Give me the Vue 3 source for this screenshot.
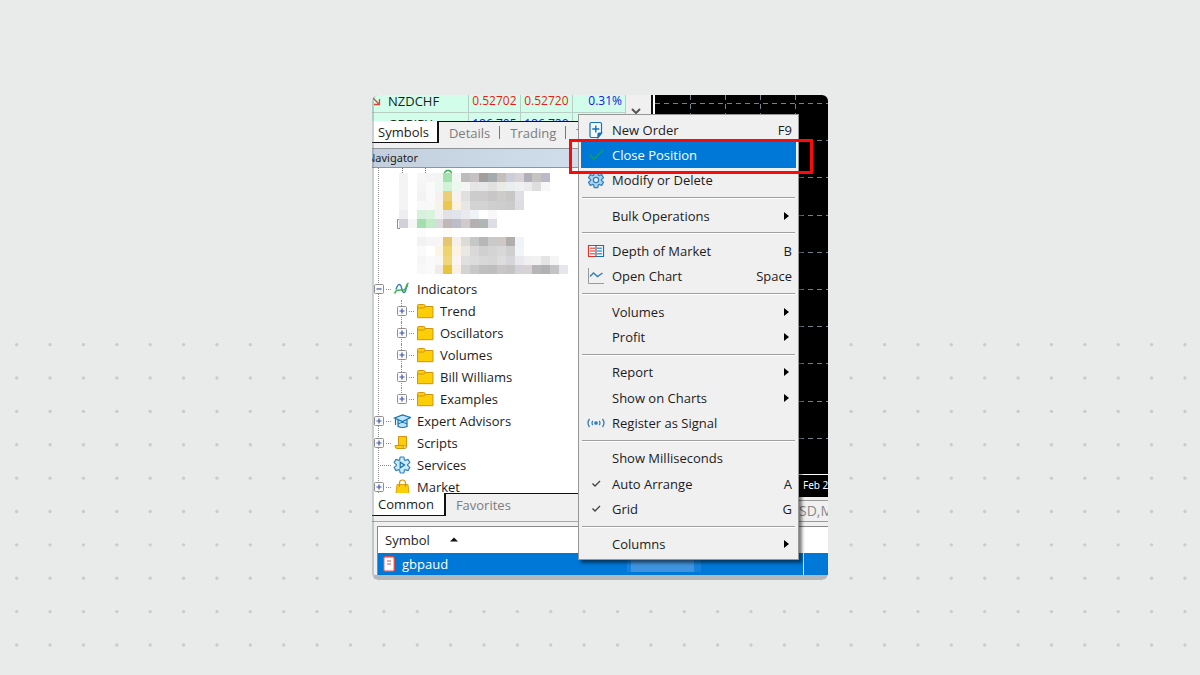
<script setup>
import { ref } from 'vue'

const quotes = [
  { symbol: 'NZDCHF', dir: 'down', bid: '0.52702', ask: '0.52720', change: '0.31%' },
  { symbol: 'GBPJPY', dir: 'flat', bid: '186.705', ask: '186.729', change: '' }
]

const tree = [
  { label: 'Indicators', icon: 'indicators', level: 1, box: 'minus' },
  { label: 'Trend', icon: 'folder', level: 2, box: 'plus' },
  { label: 'Oscillators', icon: 'folder', level: 2, box: 'plus' },
  { label: 'Volumes', icon: 'folder', level: 2, box: 'plus' },
  { label: 'Bill Williams', icon: 'folder', level: 2, box: 'plus' },
  { label: 'Examples', icon: 'folder', level: 2, box: 'plus', last: true },
  { label: 'Expert Advisors', icon: 'expert', level: 1, box: 'plus' },
  { label: 'Scripts', icon: 'script', level: 1, box: 'plus' },
  { label: 'Services', icon: 'service', level: 1, box: '' },
  { label: 'Market', icon: 'market', level: 1, box: 'plus' }
]

const menu = [
  { label: 'New Order', icon: 'new', key: 'F9' },
  { label: 'Close Position', icon: 'close', active: true },
  { label: 'Modify or Delete', icon: 'gear' },
  { sep: true },
  { label: 'Bulk Operations', sub: true },
  { sep: true },
  { label: 'Depth of Market', icon: 'depth', key: 'B' },
  { label: 'Open Chart', icon: 'chart', key: 'Space' },
  { sep: true },
  { label: 'Volumes', sub: true },
  { label: 'Profit', sub: true },
  { sep: true },
  { label: 'Report', sub: true },
  { label: 'Show on Charts', sub: true },
  { label: 'Register as Signal', icon: 'signal' },
  { sep: true },
  { label: 'Show Milliseconds' },
  { label: 'Auto Arrange', icon: 'check', key: 'A' },
  { label: 'Grid', icon: 'check', key: 'G' },
  { sep: true },
  { label: 'Columns', sub: true }
]

// Censored account rows: one colour per block, "-" leaves the block empty.
const mosaic = [
  'f3f3f3 - f7f7f7 f5f5f5 f3f5f3 a3e2af f3f6f3 bdbbbb c8c1c4 a19f9d a4aaae c5bebb cbced6 d8d2d8 b3aeb8 c4c4c0 bdb9cb',
  'f4f4f4 - f5f5f5 fafafa edf8f0 d0f3d7 eaf8ed f5f6f4 e5e5e5 e7e7e7 e1e2e0 eaeae7 ebeeee f0f0f0 ececee dedede f7f7f8',
  'f4f4f4 - f3f3f3 fafafa f7f2ef ebcf75 f6f2f0 e0dfe1 cdcccd cdcbcb c8c7c7 cdccca c8c7c6 e0dfe4',
  'f4f4f4 - f8f8f8 f8f8f8 f8f3e8 ebc74e faf3e0 e9e7e6 d3d3d3 d3d3d3 cfcfcf cdcdcd cbcbcb dedee2',
  'eeeef0 - d6f1dc daf3df f2f2f2 e2e2e6 e2e4eb eaeaee f0f3f6 - f8f8fa',
  'd0d0d8 f6f6f6 a2dfae c2ebc8 dcd9da c0b7b8 bcbdc6 d0cacb b4b0b3 b0b6b6 dedce5',
  '- - fbfbfb - - fdfbf8',
  '- - f2f2f2 f5f5f5 f8f6f4 e6c66c f6f0ea dedad8 c4c8c8 b6b8b8 cacaca cfc8c5 b0afae eef4f9',
  '- - fafafa - fbf5e8 efd36c fbf4e4 ebe8e4 dad8d8 d0d0d0 d4d4d4 d8d8d8 cfcfcf f2f5f7',
  '- - f6f6f6 fafafa faf8f5 f1d67a faf5f0 e0dede dcdcdc d8d8d8 d6d6d6 dddddf d6d6da e9e9ed f0f0f2 f2f2f2 e4e4e6 f5f5f5 -',
  '- - f8f8f8 fafafa f2ece9 e8c33c f8f2e6 d3d2d4 c8c8c8 c0bfc0 bebebe c8c6c6 c4c4c4 d2d2d8 d6d2d6 b6b6b8 b2b2b4 c4c4c6 e6e6ee'
].flatMap((row, y) =>
  row.split(' ').map((c, x) => ({ x, y, c })).filter(b => b.c !== '-')
)

const dots = []
for (let r = 0; r < 10; r++)
  for (let c = 0; c < 36; c++) dots.push({ x: 50 + c * 100.14, y: 1034 + r * 100.1 })

// Six-toothed cog centred in an 18-unit box.
function cog(outer, inner) {
  const pts = []
  for (let k = 0; k < 6; k++)
    for (const [a, r] of [[-26, inner], [-13, outer], [13, outer], [26, inner]]) {
      const t = ((k * 60 + a - 90) * Math.PI) / 180
      pts.push((9 + r * Math.cos(t)).toFixed(2) + ' ' + (9 + r * Math.sin(t)).toFixed(2))
    }
  return 'M' + pts.join('L') + 'Z'
}
const cogPath = cog(7.8, 5.4)
const servicePath = cog(8.2, 5.6)

const gridRows = Array.from({ length: 10 }, (_, i) => Math.round(8 + i * 37.2))
const gridCols = [35, 70, 105, 140]
const marketTab = ref('Symbols')
const navTab = ref('Common')
</script>

<template>
  <main class="page">
    <svg class="dots" viewBox="0 0 3600 2025" preserveAspectRatio="none" aria-hidden="true">
      <circle v-for="(d, i) in dots" :key="i" :cx="d.x" :cy="d.y" r="5" fill="#c9cccb" />
    </svg>

    <section class="window">
      <div class="upper">
        <div class="left">
          <div class="market">
            <table class="quotes">
              <colgroup><col class="c-sym"><col class="c-num"><col class="c-num"><col></colgroup>
              <tbody>
                <tr v-for="q in quotes" :key="q.symbol">
                  <td class="sym">
                    <div>
                      <svg width="10" height="10" viewBox="0 0 10 10" fill="none">
                        <path v-if="q.dir === 'down'" d="M1 2l6 6M7.500 3v5.500H2" stroke="#e0443c" stroke-width="1.300" />
                        <path v-else d="M0 3h8" stroke="#2fae4a" stroke-width="2" />
                      </svg>{{ q.symbol }}
                    </div>
                  </td>
                  <td :class="q.dir">{{ q.bid }}</td>
                  <td :class="q.dir">{{ q.ask }}</td>
                  <td class="flat">{{ q.change }}</td>
                </tr>
              </tbody>
            </table>
            <div class="scroll">
              <svg width="10" height="6" viewBox="0 0 10 6" fill="none"><path d="M1 1l4 4 4-4" stroke="#555" stroke-width="2" /></svg>
            </div>
          </div>

          <nav class="tabs">
            <button v-for="t in ['Symbols', 'Details', 'Trading', 'Ticks']" :key="t" :class="{ on: marketTab === t }" @click="marketTab = t">{{ t }}</button>
          </nav>

          <h2 class="nav-title">Navigator</h2>

          <div class="tree">
            <div class="censored">
              <svg class="blocks" viewBox="0 0 169 106" aria-hidden="true">
                <path d="M3.500 0v5M26.500 0v5" stroke="#777" stroke-dasharray="1 1" />
                <path d="M45.500 6q0-3.500 3.500-3.500t3.500 3.500" stroke="#2fae4a" stroke-width="1.300" fill="none" />
                <path d="M1 51.500h-2.500v9h2.500" stroke="#8f8f8f" fill="none" />
                <g transform="translate(0 5) scale(8.895 9.18)" shape-rendering="crispEdges">
                  <rect v-for="(b, i) in mosaic" :key="i" :x="b.x" :y="b.y" width="1" height="1" :fill="'#' + b.c" />
                </g>
              </svg>
            </div>
            <div v-for="n in tree" :key="n.label" class="node" :class="['l' + n.level, { last: n.last }]">
              <button v-if="n.box" class="box" :aria-label="'Toggle ' + n.label">
                <svg width="10" height="10" viewBox="0 0 10 10">
                  <rect x="0.500" y="0.500" width="9" height="9" rx="1" fill="#fafafa" stroke="#8f8f8f" />
                  <path :d="n.box === 'plus' ? 'M2.500 5h5M5 2.500v5' : 'M2.500 5h5'" stroke="#3c55a8" stroke-width="1.200" />
                </svg>
              </button>
              <span v-else class="box"></span>
              <span class="link" :class="{ long: !n.box }"></span>
              <svg class="icon" width="18" height="18" viewBox="0 0 18 18" fill="none">
                <g v-if="n.icon === 'folder'">
                  <path d="M1.500 3.500q0-1 1-1h5.200q1.300 0 1.300 1.200v.8h8v11.200H1.500z" fill="#fbce07" stroke="#cf9412" />
                  <path d="M2 6h5.500q1.500 0 1.500-1.500" stroke="#cf9412" />
                </g>
                <g v-else-if="n.icon === 'indicators'" stroke-width="1.400">
                  <path d="M3 9.500C4 6 4.500 4.500 6.500 4.500c2.500 0 2 8 4.500 8s1.500-6.500 4-7" stroke="#3585bd" />
                  <path d="M1.500 13.500l2-3 3.500-.5h4l1.500-1.500 1.500-4 1.500-1.500" stroke="#3db54a" />
                </g>
                <g v-else-if="n.icon === 'expert'" stroke="#1671ad" stroke-width="1.200">
                  <path d="M5 8v6.500q4.500 2 9 0V8" fill="#bfe4fa" />
                  <path d="M1.500 6l8-3 8 2.500-8 4z" fill="#bfe4fa" />
                  <path d="M2.500 6.500v6.500M5 12q4.500-3 9 0" />
                </g>
                <g v-else-if="n.icon === 'script'">
                  <path d="M5.500 2.500h8v9.500h-8z" fill="#fbce07" stroke="#cf9412" />
                  <path d="M2 11.500h8q0 3 2 3H4q-2 0-2-3zM13.500 12q0 2.500-1.500 2.500" fill="#fbce07" stroke="#cf9412" />
                </g>
                <g v-else-if="n.icon === 'service'">
                  <path :d="servicePath" fill="#cbeafd" stroke="#3585bd" stroke-width="1.200" stroke-linejoin="round" />
                  <path d="M7.200 6.200v5.600l4.300-2.800z" stroke="#1671ad" stroke-width="1.200" />
                </g>
                <g v-else>
                  <path d="M4 6.500h11l1 9.500H3z" fill="#fbce07" stroke="#d9a20f" />
                  <path d="M6.500 9V5q0-3 3-3t3 3v4" stroke="#cf9412" stroke-width="1.200" />
                </g>
              </svg>
              <span>{{ n.label }}</span>
            </div>
          </div>

          <nav class="tabs lower">
            <button v-for="t in ['Common', 'Favorites']" :key="t" :class="{ on: navTab === t }" @click="navTab = t">{{ t }}</button>
          </nav>
        </div>

        <div class="right">
          <div class="plot">
            <svg width="100%" height="100%" stroke="#73818f" stroke-dasharray="5 4" shape-rendering="crispEdges" aria-hidden="true">
              <line v-for="y in gridRows" :key="'r' + y" x1="0" x2="100%" :y1="y" :y2="y" />
              <line v-for="x in gridCols" :key="'c' + x" :x1="x" :x2="x" y1="0" y2="100%" />
            </svg>
          </div>
          <div class="axis">Feb 2</div>
          <div class="chart-tab">SD,M</div>
        </div>
      </div>

      <div class="toolbox">
        <table class="trades">
          <colgroup><col><col class="c-last"></colgroup>
          <thead>
            <tr>
              <th>Symbol<svg width="8" height="5" viewBox="0 0 8 5"><path d="M0 4.500L4 .5l4 4z" fill="#111" /></svg></th>
              <th></th>
            </tr>
          </thead>
          <tbody>
            <tr>
              <td>
                <div class="trade">
                  <svg width="12" height="16" viewBox="0 0 12 16"><rect x="0.700" y="0.700" width="10.600" height="14.600" rx="1.500" fill="#fff" stroke="#d8504c" stroke-width="1.400" /><path d="M4 5h4M4 8h4" stroke="#d8504c" stroke-width="1.200" /></svg>
                  <span>gbpaud</span>
                  <i class="hidden-value"></i>
                </div>
              </td>
              <td></td>
            </tr>
          </tbody>
        </table>
      </div>

      <div class="menu" role="menu">
        <template v-for="(m, i) in menu" :key="i">
          <hr v-if="m.sep">
          <button v-else role="menuitem" :class="{ active: m.active }">
            <svg class="mi" width="18" height="18" viewBox="0 0 18 18" fill="none">
              <g v-if="m.icon === 'new'" stroke="#1671ad" stroke-width="1.200">
                <path d="M4.500 1.500h8.500q1.500 0 1.500 1.500v9l-3.500 4.500H4.500q-1.500 0-1.500-1.500V3q0-1.500 1.500-1.500z" fill="#f3faff" />
                <path d="M14.500 12h-2.500q-1 0-1 1v3.500z" fill="#1671ad" />
                <path d="M5.300 8h7M8.800 4.500v7" stroke-width="1.400" />
              </g>
              <path v-else-if="m.icon === 'close'" d="M2.500 8.500l4.500 4.500 9-9" stroke="#0d9e63" stroke-width="1.600" />
              <g v-else-if="m.icon === 'gear'" stroke="#3480b8" stroke-width="1.300" stroke-linejoin="round">
                <path :d="cogPath" fill="#a9d3ee" />
                <circle cx="9" cy="9" r="2.600" fill="#f0f0f0" />
              </g>
              <g v-else-if="m.icon === 'depth'" stroke-width="1.200">
                <path d="M9 3.500H1.500v11H9" fill="#fff" stroke="#e0322c" /><path d="M9 3.500h7.500v11H9" fill="#fff" stroke="#1671ad" />
                <path d="M3 6.200h5M3 9h5M3 11.800h5" stroke="#ee6a62" stroke-width="1.600" /><path d="M10 6.200h5M10 9h5M10 11.800h5" stroke="#4a9bd0" stroke-width="1.600" />
                <path d="M9 3v12" stroke="#53597c" />
              </g>
              <g v-else-if="m.icon === 'chart'">
                <path d="M1.500 1v15.500H17" stroke="#9b9b9b" /><path d="M3 9.500L6.500 6l4 3.500L15.500 6" stroke="#3480b8" stroke-width="1.400" />
              </g>
              <g v-else-if="m.icon === 'signal'" stroke="#3480b8" stroke-width="1.300">
                <circle cx="9" cy="9" r="1.200" fill="#1671ad" />
                <path d="M5.800 6.800q-1.500 2.200 0 4.400M12.200 6.800q1.500 2.200 0 4.400M2.500 5q-3 4 0 8M15.500 5q3 4 0 8" />
              </g>
              <path v-else-if="m.icon === 'check'" d="M5.500 8.500l2.500 2.500 5-5" stroke="#444" stroke-width="1.400" />
            </svg>
            <span class="label">{{ m.label }}</span>
            <span v-if="m.key">{{ m.key }}</span>
            <svg v-if="m.sub" class="sub" width="5" height="8" viewBox="0 0 5 8"><path d="M0 0l5 4-5 4z" fill="#000" /></svg>
          </button>
        </template>
      </div>
    </section>
  </main>
</template>

<style>
html, body { margin: 0; background: #e8ebea; }
</style>

<style scoped>
.page {
  position: relative;
  min-height: 100vh;
  display: flex;
  align-items: center;
  justify-content: center;
  overflow: hidden;
  font: 13px/22px "Open Sans", "Noto Sans", sans-serif;
  color: #1c1c1c;
}
.dots { position: absolute; inset: 0; width: 100%; height: 100%; }
button { font: inherit; color: inherit; border: 0; padding: 0; background: none; text-align: left; }

.window {
  position: relative;
  width: 38%;
  min-width: 456px;
  overflow: hidden;
  border-radius: 6px;
  background: #f0f0f0;
}
.window::after {
  content: "";
  position: absolute;
  inset: 0;
  border-left: 2px solid rgba(110, 120, 125, .35);
  border-bottom: 5px solid rgba(90, 100, 105, .4);
  border-radius: 6px;
  pointer-events: none;
}
.upper { display: grid; grid-template-columns: 281px 1fr; padding-bottom: 4px; }
.left { min-width: 0; border-bottom: 1px solid #a8a8a8; }

.market { display: flex; height: 26px; overflow: hidden; align-items: flex-start; }
.quotes { width: 254px; table-layout: fixed; border-collapse: collapse; margin-top: -5px; background: #d2fdea; }
.c-sym { width: 96px; }
.c-num { width: 52px; }
.quotes td { height: 21px; padding: 0 3px; text-align: right; border-right: 1px solid #b9cfc5; border-bottom: 1px solid #b9cfc5; white-space: nowrap; font-size: 12px; }
.quotes .sym { text-align: left; padding: 0; font-size: 13px; }
.sym div { display: flex; align-items: center; gap: 6px; }
.quotes .down { color: #f01818; }
.quotes .flat { color: #1414f0; }
.scroll { flex: 1; align-self: stretch; border-right: 2px solid #111; padding: 13px 0 0 5px; line-height: 0; }

.tabs { display: flex; height: 22px; line-height: 20px; color: #7c7c7c; margin-bottom: 5px; }
.tabs button { flex: none; padding: 0 10px; position: relative; border-top: 1px solid #111; }
.tabs button:last-child { flex: 1; }
.tabs .on { background: #fff; color: #1c1c1c; border: solid #111; border-width: 0 2px 1px 0; padding: 0 8px 0 6px; }
.tabs button:not(.on):not(:last-child)::after { content: ""; position: absolute; right: 0; top: 4px; height: 13px; border-right: 1px solid #777; }
.nav-title {
  margin: 0;
  border: solid #8f959a;
  border-width: 1px 0;
  height: 18px;
  font: 11px/18px "Noto Sans", sans-serif;
  text-indent: -5px;
  background: linear-gradient(90deg, #c3cfdd, #d5e3f1);
}

.tree { position: relative; height: 325px; overflow: hidden; background: #fff; }
.tree::before { content: ""; position: absolute; left: 6px; top: 0; bottom: 0; border-left: 1px dotted #8c8c8c; }
.censored { height: 110px; padding-left: 27px; }
.blocks { display: block; width: 169px; height: 106px; overflow: visible; }
.node { position: relative; display: flex; align-items: center; height: 22px; padding-left: 2px; }
.node.l2 { padding-left: 25px; }
.node.l2::before { content: ""; position: absolute; left: 29px; top: 0; bottom: 0; border-left: 1px dotted #8c8c8c; }
.node.last::before { bottom: 11px; }
.box { position: relative; width: 10px; height: 10px; line-height: 0; }
.link { width: 5px; margin: 0 2px; border-top: 1px dotted #8c8c8c; }
.link.long { width: 11px; margin-left: -4px; }
.icon { margin-right: 6px; }

.tabs.lower { height: 23px; line-height: 20px; }
.lower .on { padding-right: 10px; }

.right { display: flex; flex-direction: column; border-left: 2px solid #fff; }
.plot { flex: 1; min-height: 0; background: #000; line-height: 0; }
.axis { height: 22px; background: #000; color: #fff; border-top: 1px solid #fff; font: 10px/20px "Noto Sans", sans-serif; padding-left: 148px; overflow: hidden; white-space: nowrap; }
.chart-tab { height: 20px; margin-top: 3px; border: solid #999; border-width: 1px 0; padding-left: 144px; color: #8a8a8a; font-size: 14px; line-height: 20px; overflow: hidden; white-space: nowrap; }

.toolbox { padding: 0 0 5px 5px; background: #f0f0f0; }
.trades { width: 100%; table-layout: fixed; border-collapse: collapse; background: #fff; border-left: 1px solid #888; border-top: 1px solid #888; }
.c-last { width: 25px; }
.trades th { height: 26px; padding: 0 7px; font-weight: 400; text-align: left; }
.trades th svg { margin-left: 20px; vertical-align: 3px; }
.trades td { height: 21px; padding: 0; background: #0078d7; color: #fff; border-right: 1px solid #d8e9f8; }
.trades td:last-child, .trades th:last-child { border-right: 0; }
.trade { display: flex; align-items: center; gap: 7px; padding-left: 5px; }
.hidden-value { width: 74px; height: 15px; margin-left: 172px; background: linear-gradient(90deg, #1482da 6%, #3f93df 6% 90%, #1482da 90%); }

.menu {
  position: absolute;
  left: 206px;
  top: 19px;
  bottom: 20px;
  width: 221px;
  box-sizing: border-box;
  display: flex;
  flex-direction: column;
  padding: 2px;
  border: 1px solid #979797;
  background: #f0f0f0;
  box-shadow: 3px 3px 3px rgba(0, 0, 0, .5);
}
.menu button { position: relative; flex: 1 1 0; min-height: 0; display: flex; align-items: center; padding: 0 4px 0 6px; }
.menu .label { flex: 1; margin-left: 7px; }
.menu hr { box-sizing: border-box; width: auto; height: 2px; margin: 4px 1px; border: 0; border-top: 1px solid #a0a0a0; border-bottom: 1px solid #fff; }
.menu .active { background: #0078d7; color: #fff; }
.menu .active::after { content: ""; position: absolute; inset: -3px -17px -6px -12px; border: 3px solid #f90b0b; z-index: 1; pointer-events: none; }
.menu .sub { margin-right: 3px; }
</style>
